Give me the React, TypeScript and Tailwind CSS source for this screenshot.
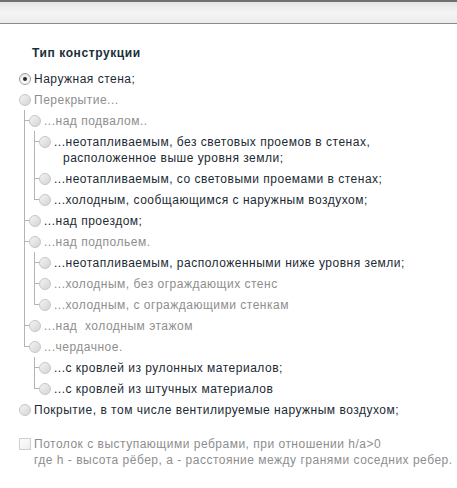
import React from "react";

type Node = {
  label: string[];
  dark?: boolean;
  checked?: boolean;
  children?: Node[];
};

const TREE: Node[] = [
  { label: ["Наружная стена;"], dark: true, checked: true },
  {
    label: ["Перекрытие..."],
    children: [
      {
        label: ["...над подвалом.."],
        children: [
          {
            label: ["...неотапливаемым, без световых проемов в стенах,", "расположенное выше уровня земли;"],
            dark: true,
          },
          { label: ["...неотапливаемым, со световыми проемами в стенах;"], dark: true },
          { label: ["...холодным, сообщающимся с наружным воздухом;"], dark: true },
        ],
      },
      { label: ["...над проездом;"], dark: true },
      {
        label: ["...над подпольем."],
        children: [
          { label: ["...неотапливаемым, расположенными ниже уровня земли;"], dark: true },
          { label: ["...холодным, без ограждающих стенс"] },
          { label: ["...холодным, с ограждающими стенкам"] },
        ],
      },
      { label: ["...над  холодным этажом"] },
      {
        label: ["...чердачное."],
        children: [
          { label: ["...с кровлей из рулонных материалов;"], dark: true },
          { label: ["...с кровлей из штучных материалов"], dark: true },
        ],
      },
    ],
  },
  { label: ["Покрытие, в том числе вентилируемые наружным воздухом;"], dark: true },
];

const Radio = ({ checked }: { checked?: boolean }) =>
  checked ? (
    <span className="mt-[2px] flex h-3 w-3 shrink-0 items-center justify-center rounded-full border border-[#9c9c9c] bg-gradient-to-b from-[#e8e8e8] to-white">
      <span className="h-[4px] w-[4px] rounded-full bg-[#2a2a2a]" />
    </span>
  ) : (
    <span className="mt-[2px] h-3 w-3 shrink-0 rounded-full border border-[#c6c6c6] bg-gradient-to-br from-[#f4f4f4] to-[#d4d4d4]" />
  );

const Item = ({ node, child, last }: { node: Node; child: boolean; last: boolean }) => (
  <li className="relative">
    {child && (
      <>
        {/* tree connectors */}
        <span className={`absolute left-[-5px] top-0 w-px bg-[#b4b4b4] ${last ? "h-[11px]" : "h-full"}`} />
        <span className="absolute left-[-5px] top-[10px] h-px w-[5px] bg-[#b4b4b4]" />
      </>
    )}
    <div className="flex items-start gap-[3px] pt-[3px] pb-[2px]">
      <Radio checked={node.checked} />
      <div className={node.dark ? "text-[#1b2a33]" : "text-[#8e8e8e]"}>
        {node.label.map((l, i) => (
          <div key={i} className={`whitespace-pre leading-4 ${i > 0 ? "pl-[9px]" : ""}`}>
            {l}
          </div>
        ))}
      </div>
    </div>
    {node.children && (
      <ul className="ml-[10px]">
        {node.children.map((c, i) => (
          <Item key={i} node={c} child last={i === node.children!.length - 1} />
        ))}
      </ul>
    )}
  </li>
);

export default function App() {
  return (
    <div
      className="min-h-[488px] w-[457px] bg-white text-[12px] tracking-[0.5px]"
      style={{ fontFamily: '"Liberation Sans", Arial, sans-serif' }}
    >
      {/* Top bar */}
      <div className="h-6 border-t-2 border-b border-t-[#6f6f6f] border-b-[#8c8c8c] bg-gradient-to-b from-[#e4e4e4] via-[#f5f5f5] to-[#ebebeb]" />

      <div className="pl-[19px]">
        <h2 className="ml-[13px] mt-[21px] text-[12px] font-bold leading-4 tracking-[0.6px] text-[#19303b]">Тип конструкции</h2>

        <ul className="mt-[7px]">
          {TREE.map((n, i) => (
            <Item key={i} node={n} child={false} last={false} />
          ))}
        </ul>

        {/* Checkbox */}
        <div className="mt-[16px] flex items-start gap-[3px] text-[#8e8e8e]">
          <span className="mt-[2px] h-3 w-3 shrink-0 border border-[#cfcfcf] bg-gradient-to-br from-white to-[#ececec]" />
          <div>
            <div className="leading-4">Потолок с выступающими ребрами, при отношении h/a&gt;0</div>
            <div className="leading-4">где h - высота рёбер, a - расстояние между гранями соседних ребер.</div>
          </div>
        </div>
      </div>
    </div>
  );
}
